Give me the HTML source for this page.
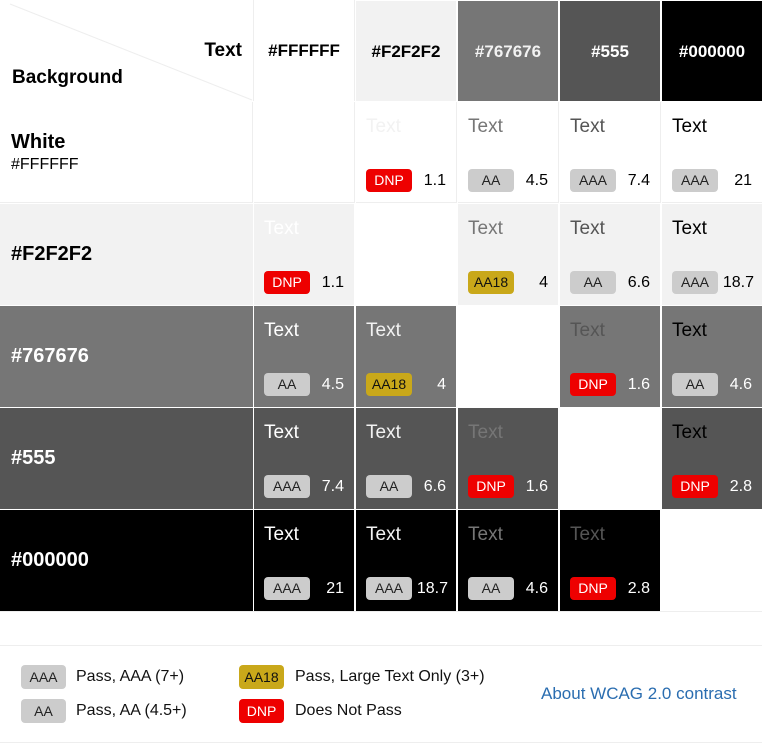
<!DOCTYPE html>
<html><head><meta charset="utf-8"><style>
*{margin:0;padding:0;box-sizing:border-box}
body{width:762px;height:744px;background:#fff;font-family:"Liberation Sans",sans-serif;position:relative;overflow:hidden}
.c{position:absolute;width:101px;height:101px}
.h{font-weight:bold;font-size:17px;text-align:center;line-height:101px}
.t{position:absolute;left:10px;top:14px;font-size:19px}
.b{position:absolute;left:10px;top:67px;width:46px;height:23px;border-radius:4px;font-size:14px;text-align:center;line-height:23px}
.n{position:absolute;right:10px;top:67px;font-size:16px;line-height:23px}
.AAA,.AA{background:#ccc;color:#222}.AA18{background:#c9a81a;color:#111}.DNP{background:#e00;color:#fff}
.r{position:absolute;left:0;width:253px;height:101px;font-weight:bold;font-size:20px;padding-left:11px}
.lb{position:absolute;width:45px;height:24px;border-radius:4px;font-size:14px;text-align:center;line-height:24px}
.lt{position:absolute;font-size:16px;line-height:24px;color:#111}
.d{width:100px}
</style></head><body>
<div style="position:absolute;left:0;top:0;width:762px;height:612px;border-bottom:1px solid #eee"></div>
<svg style="position:absolute;left:0;top:0" width="254" height="101"><line x1="10" y1="4" x2="252" y2="100" stroke="#eee" stroke-width="1"/><line x1="253.5" y1="0" x2="253.5" y2="101" stroke="#eee"/><line x1="0" y1="101.5" x2="762" y2="101.5" stroke="#eee"/></svg>
<div style="position:absolute;right:520px;top:40px;font-weight:bold;font-size:19px">Text</div>
<div style="position:absolute;left:12px;top:67px;font-weight:bold;font-size:19px">Background</div>
<div class="c h" style="left:254px;top:0;background:#fff;color:#000;border-right:1px solid #eee">#FFFFFF</div>
<div class="c h d" style="left:356px;top:1px;height:100px;background:#f2f2f2;color:#000">#F2F2F2</div>
<div class="c h d" style="left:458px;top:1px;height:100px;background:#767676;color:#f2f2f2">#767676</div>
<div class="c h d" style="left:560px;top:1px;height:100px;background:#555;color:#fff">#555</div>
<div class="c h d" style="left:662px;top:1px;height:100px;background:#000;color:#fff">#000000</div>

<div class="r" style="top:102px;background:#fff;color:#000;border-right:1px solid #eee;border-bottom:1px solid #eee"><div style="position:absolute;top:29px">White</div><div style="position:absolute;top:54px;font-weight:normal;font-size:16px">#FFFFFF</div></div>
<div class="r" style="top:204px;background:#f2f2f2;color:#000;line-height:101px">#F2F2F2</div>
<div class="r" style="top:306px;background:#767676;color:#fff;line-height:101px">#767676</div>
<div class="r" style="top:408px;background:#555;color:#fff;line-height:101px">#555</div>
<div class="r" style="top:510px;background:#000;color:#fff;line-height:101px">#000000</div>

<div class="c" style="left:254px;top:102px;background:#fff;border-right:1px solid #eee;border-bottom:1px solid #eee"></div>
<div class="c" style="left:356px;top:102px;background:#fff;border-bottom:1px solid #eee;border-right:1px solid #eee"><div class="t" style="color:#f2f2f2">Text</div><div class="b DNP">DNP</div><div class="n" style="color:#000">1.1</div></div>
<div class="c" style="left:458px;top:102px;background:#fff;border-bottom:1px solid #eee;border-right:1px solid #eee"><div class="t" style="color:#767676">Text</div><div class="b AA">AA</div><div class="n" style="color:#000">4.5</div></div>
<div class="c" style="left:560px;top:102px;background:#fff;border-bottom:1px solid #eee;border-right:1px solid #eee"><div class="t" style="color:#555">Text</div><div class="b AAA">AAA</div><div class="n" style="color:#000">7.4</div></div>
<div class="c d" style="left:662px;top:102px;background:#fff;border-bottom:1px solid #eee"><div class="t" style="color:#000">Text</div><div class="b AAA">AAA</div><div class="n" style="color:#000">21</div></div>

<div class="c d" style="left:254px;top:204px;background:#f2f2f2"><div class="t" style="color:#fff">Text</div><div class="b DNP">DNP</div><div class="n" style="color:#000">1.1</div></div>
<div class="c d" style="left:356px;top:204px;background:#fff"></div>
<div class="c d" style="left:458px;top:204px;background:#f2f2f2"><div class="t" style="color:#767676">Text</div><div class="b AA18">AA18</div><div class="n" style="color:#000">4</div></div>
<div class="c d" style="left:560px;top:204px;background:#f2f2f2"><div class="t" style="color:#555">Text</div><div class="b AA">AA</div><div class="n" style="color:#000">6.6</div></div>
<div class="c d" style="left:662px;top:204px;background:#f2f2f2"><div class="t" style="color:#000">Text</div><div class="b AAA">AAA</div><div class="n" style="color:#000;right:8px">18.7</div></div>

<div class="c d" style="left:254px;top:306px;background:#767676"><div class="t" style="color:#fff">Text</div><div class="b AA">AA</div><div class="n" style="color:#fff">4.5</div></div>
<div class="c d" style="left:356px;top:306px;background:#767676"><div class="t" style="color:#f2f2f2">Text</div><div class="b AA18">AA18</div><div class="n" style="color:#fff">4</div></div>
<div class="c d" style="left:458px;top:306px;background:#fff"></div>
<div class="c d" style="left:560px;top:306px;background:#767676"><div class="t" style="color:#555">Text</div><div class="b DNP">DNP</div><div class="n" style="color:#fff">1.6</div></div>
<div class="c d" style="left:662px;top:306px;background:#767676"><div class="t" style="color:#000">Text</div><div class="b AA">AA</div><div class="n" style="color:#fff">4.6</div></div>

<div class="c d" style="left:254px;top:408px;background:#555"><div class="t" style="color:#fff">Text</div><div class="b AAA">AAA</div><div class="n" style="color:#fff">7.4</div></div>
<div class="c d" style="left:356px;top:408px;background:#555"><div class="t" style="color:#f2f2f2">Text</div><div class="b AA">AA</div><div class="n" style="color:#fff">6.6</div></div>
<div class="c d" style="left:458px;top:408px;background:#555"><div class="t" style="color:#767676">Text</div><div class="b DNP">DNP</div><div class="n" style="color:#fff">1.6</div></div>
<div class="c d" style="left:560px;top:408px;background:#fff"></div>
<div class="c d" style="left:662px;top:408px;background:#555"><div class="t" style="color:#000">Text</div><div class="b DNP">DNP</div><div class="n" style="color:#fff">2.8</div></div>

<div class="c d" style="left:254px;top:510px;background:#000"><div class="t" style="color:#fff">Text</div><div class="b AAA">AAA</div><div class="n" style="color:#fff">21</div></div>
<div class="c d" style="left:356px;top:510px;background:#000"><div class="t" style="color:#f2f2f2">Text</div><div class="b AAA">AAA</div><div class="n" style="color:#fff;right:8px">18.7</div></div>
<div class="c d" style="left:458px;top:510px;background:#000"><div class="t" style="color:#767676">Text</div><div class="b AA">AA</div><div class="n" style="color:#fff">4.6</div></div>
<div class="c d" style="left:560px;top:510px;background:#000"><div class="t" style="color:#555">Text</div><div class="b DNP">DNP</div><div class="n" style="color:#fff">2.8</div></div>
<div class="c d" style="left:662px;top:510px;background:#fff"></div>

<div style="position:absolute;left:0;top:645px;width:762px;height:98px;border-top:1px solid #eee;border-bottom:1px solid #eee"></div>
<div class="lb AAA" style="left:21px;top:665px">AAA</div><div class="lt" style="left:76px;top:665px">Pass, AAA (7+)</div>
<div class="lb AA" style="left:21px;top:699px">AA</div><div class="lt" style="left:76px;top:699px">Pass, AA (4.5+)</div>
<div class="lb AA18" style="left:239px;top:665px">AA18</div><div class="lt" style="left:295px;top:665px">Pass, Large Text Only (3+)</div>
<div class="lb DNP" style="left:239px;top:699px">DNP</div><div class="lt" style="left:295px;top:699px">Does Not Pass</div>
<div style="position:absolute;left:541px;top:684px;font-size:17px;color:#2a6db0">About WCAG 2.0 contrast</div>
</body></html>
